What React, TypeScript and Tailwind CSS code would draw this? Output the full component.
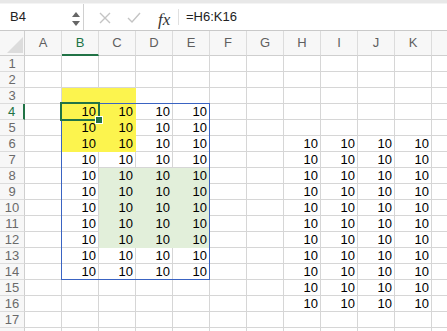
import React from "react";

const COLS = ["A", "B", "C", "D", "E", "F", "G", "H", "I", "J", "K", ""];
const ROWS = Array.from({ length: 18 }, (_, i) => i + 1);

function isYellow(r: number, c: number) {
  return (c === 1 || c === 2) && r >= 3 && r <= 6;
}
function isGreen(r: number, c: number) {
  return c >= 2 && c <= 4 && r >= 8 && r <= 12;
}
function hasValue(r: number, c: number) {
  return (c >= 1 && c <= 4 && r >= 4 && r <= 14) || (c >= 7 && c <= 10 && r >= 6 && r <= 16);
}

function Cell({ r, c }: { r: number; c: number }) {
  const yellow = isYellow(r, c);
  const green = isGreen(r, c);
  let cls =
    "h-[16px] border-r border-b flex items-center justify-end pr-[2px] text-[13px] leading-[15px] text-black ";
  if (yellow) cls += "bg-[#fcf44e] border-[#fcf44e]";
  else if (green) cls += "bg-[#e2efda] border-[#e2efda]";
  else cls += "bg-white border-[#d6d6d6]";
  return <div className={cls}>{hasValue(r, c) ? "10" : ""}</div>;
}

export default function App() {
  return (
    <div className="w-[447px] h-[331px] overflow-hidden bg-white font-['Liberation_Sans',Arial,sans-serif] select-none">
      {/* top strip */}
      <div className="h-[4px] bg-[#e8e8e8] border-b border-[#f4f4f4]" />
      {/* formula bar */}
      <div className="h-[27px] flex border-b border-[#c9c9c9] bg-white">
        <div className="w-[84px] flex items-center border-r border-[#d0d0d0] relative">
          <span className="ml-[10px] text-[13px] text-[#222]">B4</span>
          <div className="absolute left-[72px] top-[8px] flex flex-col items-center gap-[4px]">
            <div className="w-0 h-0 border-l-[4px] border-r-[4px] border-b-[5px] border-l-transparent border-r-transparent border-b-[#666]" />
            <div className="w-0 h-0 border-l-[4px] border-r-[4px] border-t-[5px] border-l-transparent border-r-transparent border-t-[#666]" />
          </div>
        </div>
        <div className="w-[95px] flex items-center border-r border-[#e0e0e0] my-[5px] relative">
          <svg className="absolute left-[15px] top-[3px]" width="12" height="12" viewBox="0 0 12 12">
            <path d="M1 1 L11 11 M11 1 L1 11" stroke="#c4c4c4" strokeWidth="1.4" fill="none" />
          </svg>
          <svg className="absolute left-[43px] top-[3px]" width="14" height="12" viewBox="0 0 14 12">
            <path d="M1 6 L5 10 L13 1" stroke="#c4c4c4" strokeWidth="1.4" fill="none" />
          </svg>
          <span className="absolute left-[74px] top-[-2px] font-['Liberation_Serif',serif] italic text-[17px] text-[#333]">
            fx
          </span>
        </div>
        <div className="flex items-center pl-[7px] text-[13px] text-[#222]">=H6:K16</div>
      </div>
      {/* sheet */}
      <div className="relative">
        <div className="grid grid-cols-[25px_repeat(12,37px)]">
          {/* header row */}
          <div className="h-[25px] border-r border-b border-[#cfcfcf] bg-[#f7f7f7] relative">
            <svg className="absolute left-[7px] top-[6px]" width="16" height="16" viewBox="0 0 16 16">
              <path d="M16 0 L16 16 L0 16 Z" fill="#dcdcdc" />
            </svg>
          </div>
          {COLS.map((col, i) => (
            <div
              key={i}
              className={
                i === 1
                  ? "h-[25px] border-r border-b-2 border-r-[#dcdcdc] border-b-[#217346] bg-[#f7f7f7] flex items-center justify-center text-[13px] text-[#217346]"
                  : "h-[25px] border-r border-b border-r-[#dcdcdc] border-b-[#cfcfcf] bg-[#f7f7f7] flex items-center justify-center text-[13px] text-[#5f5f5f]"
              }
            >
              {col}
            </div>
          ))}
          {ROWS.map((r) => (
            <React.Fragment key={r}>
              <div
                className={
                  r === 4
                    ? "h-[16px] border-r-2 border-b border-r-[#217346] border-b-[#dcdcdc] bg-[#f7f7f7] flex items-center justify-center text-[13px] text-[#217346]"
                    : "h-[16px] border-r border-b border-r-[#cfcfcf] border-b-[#dcdcdc] bg-[#f7f7f7] flex items-center justify-center text-[13px] text-[#6a6a6a]"
                }
              >
                {r <= 17 ? r : ""}
              </div>
              {COLS.map((_, c) => (
                <Cell key={c} r={r} c={c} />
              ))}
            </React.Fragment>
          ))}
        </div>
        {/* range border B4:E14 */}
        <div className="absolute left-[61px] top-[72px] w-[149px] h-[177px] border border-[#3a63c2] pointer-events-none" />
        {/* active cell selection */}
        <div className="absolute left-[60px] top-[71px] w-[40px] h-[19px] border-2 border-[#217346] pointer-events-none" />
        <div className="absolute left-[96px] top-[86px] w-[6px] h-[6px] bg-[#217346] outline outline-1 outline-white pointer-events-none" />
      </div>
    </div>
  );
}
